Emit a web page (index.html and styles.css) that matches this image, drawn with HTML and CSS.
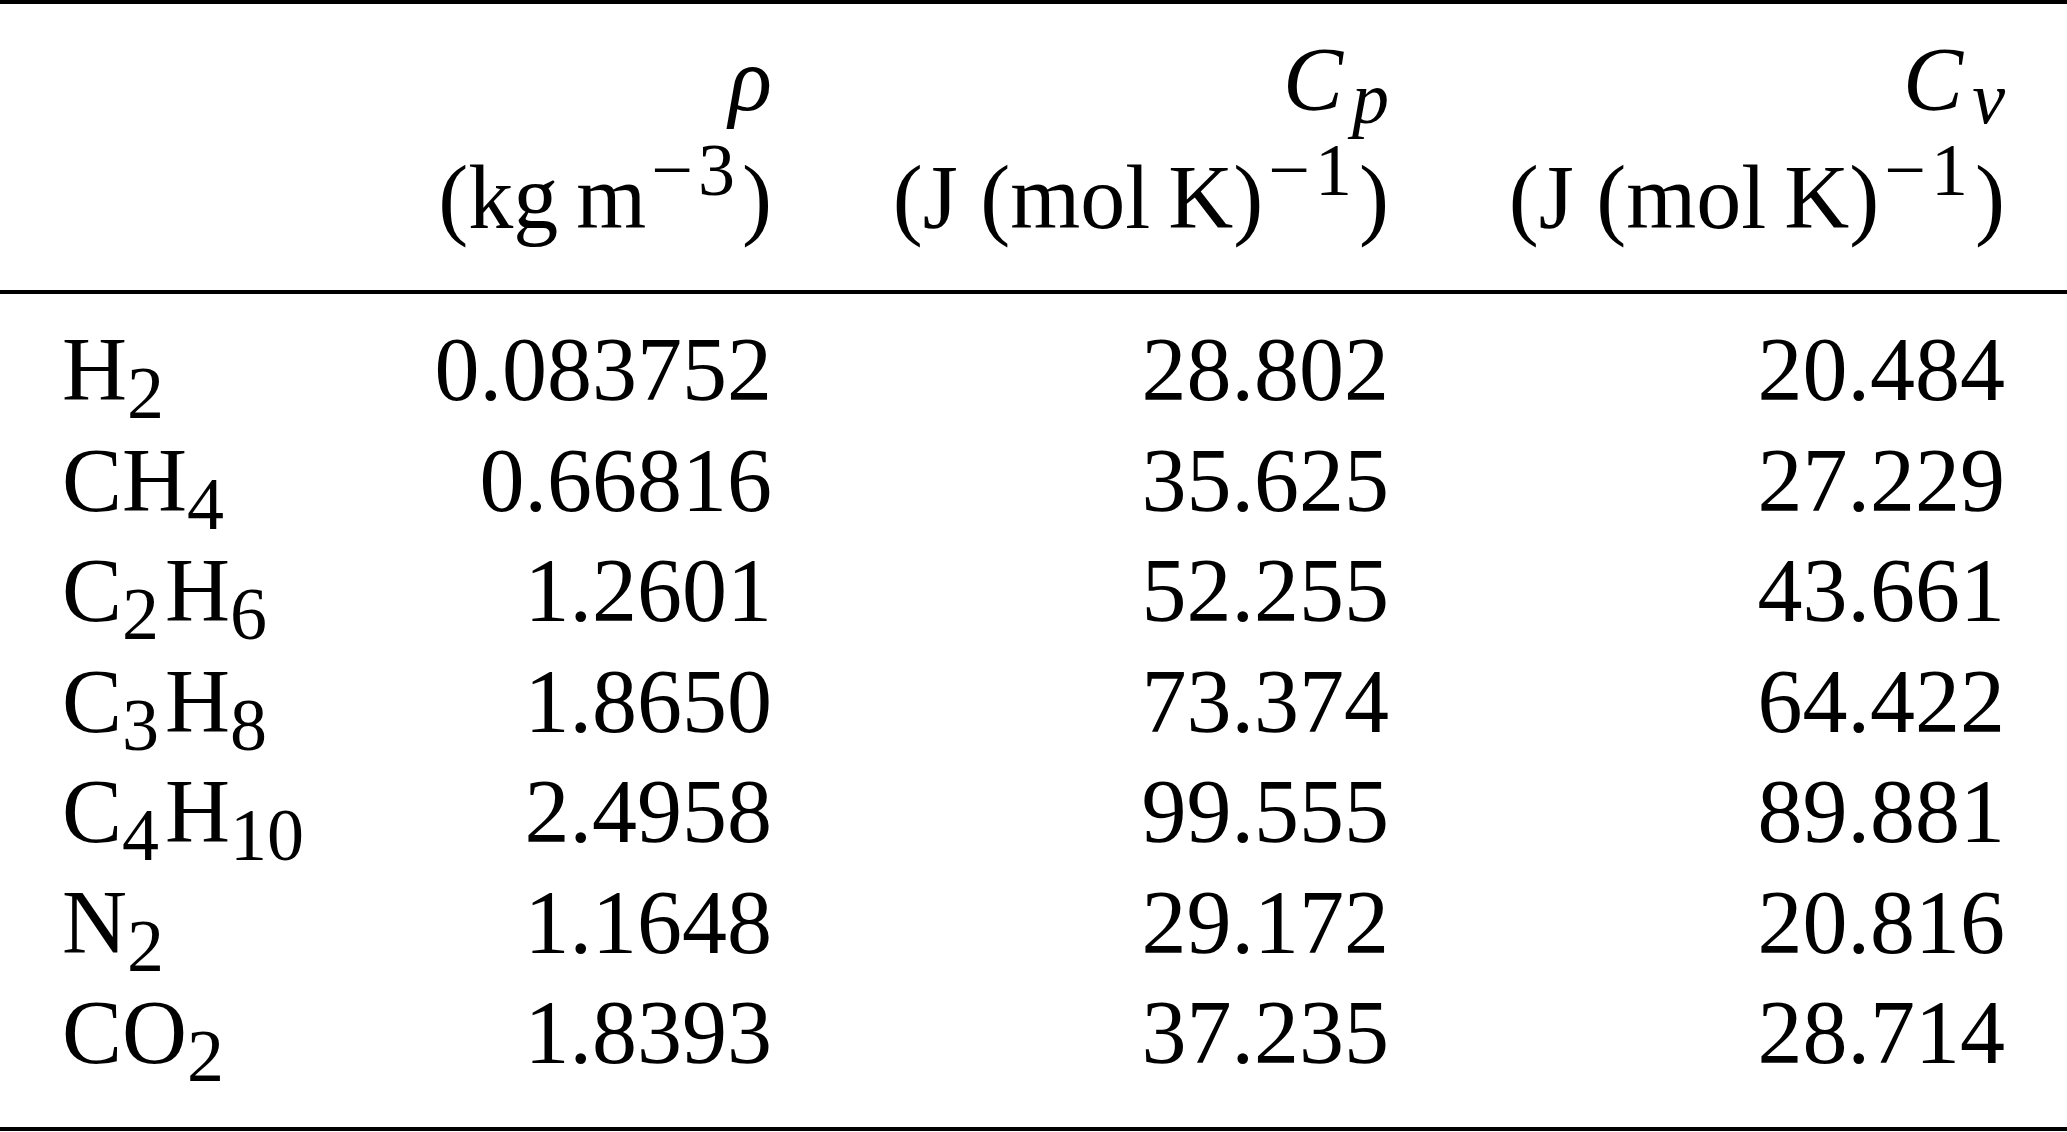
FILE: index.html
```html
<!DOCTYPE html>
<html lang="en">
<head>
    <meta charset="UTF-8">
    <meta name="viewport" content="width=device-width, initial-scale=1.0">
    <title>Gas properties</title>
    <link rel="stylesheet" href="styles.css">
</head>
<body>
    <div class="table">
        <div class="head">
            <div></div>
            <div class="num"><i>ρ</i></div>
            <div class="num"><i>C</i><sub class="msub"><i>p</i></sub></div>
            <div class="num"><i>C</i><sub class="msub"><i>v</i></sub></div>

            <div></div>
            <div class="num">(kg&thinsp;m<sup><span class="minus">−</span>3</sup>)</div>
            <div class="num">(J (mol&thinsp;K)<sup><span class="minus">−</span>1</sup>)</div>
            <div class="num">(J (mol&thinsp;K)<sup><span class="minus">−</span>1</sup>)</div>
        </div>
        <div class="body">
            <div class="gas">H<sub>2</sub></div>
            <div class="num">0.083752</div>
            <div class="num">28.802</div>
            <div class="num">20.484</div>

            <div class="gas">CH<sub>4</sub></div>
            <div class="num">0.66816</div>
            <div class="num">35.625</div>
            <div class="num">27.229</div>

            <div class="gas">C<sub>2</sub>H<sub>6</sub></div>
            <div class="num">1.2601</div>
            <div class="num">52.255</div>
            <div class="num">43.661</div>

            <div class="gas">C<sub>3</sub>H<sub>8</sub></div>
            <div class="num">1.8650</div>
            <div class="num">73.374</div>
            <div class="num">64.422</div>

            <div class="gas">C<sub>4</sub>H<sub>10</sub></div>
            <div class="num">2.4958</div>
            <div class="num">99.555</div>
            <div class="num">89.881</div>

            <div class="gas">N<sub>2</sub></div>
            <div class="num">1.1648</div>
            <div class="num">29.172</div>
            <div class="num">20.816</div>

            <div class="gas">CO<sub>2</sub></div>
            <div class="num">1.8393</div>
            <div class="num">37.235</div>
            <div class="num">28.714</div>
        </div>
    </div>
</body>
</html>
```
FILE: styles.css
```css
body {
    margin: 0;
    background: #ffffff;
    color: #000000;
    font-family: "Liberation Serif", "Times New Roman", serif;
    font-size: 90px;
}
.table {
    border-top: 4px solid #000;
    border-bottom: 4px solid #000;
}
.head,
.body {
    display: grid;
    grid-template-columns: 300px 410px 617px 616px;
    padding-left: 62px;
    padding-right: 62px;
}
.head {
    line-height: 118px;
    padding-top: 17px;
    padding-bottom: 33px;
    border-bottom: 4px solid #000;
}
.body {
    line-height: 110.5px;
    padding-top: 21px;
    padding-bottom: 38px;
}
.num {
    text-align: right;
    white-space: nowrap;
}
.gas {
    white-space: nowrap;
}
sub,
sup {
    font-size: 74px;
    line-height: 0;
}
sub {
    vertical-align: -18px;
    margin-right: 6px;
}
sub.msub {
    vertical-align: -13px;
    margin-left: 9px;
    margin-right: 0;
}
sup {
    vertical-align: 33px;
    margin-right: 7px;
}
.minus {
    margin-left: 5px;
    margin-right: 5px;
}
```
